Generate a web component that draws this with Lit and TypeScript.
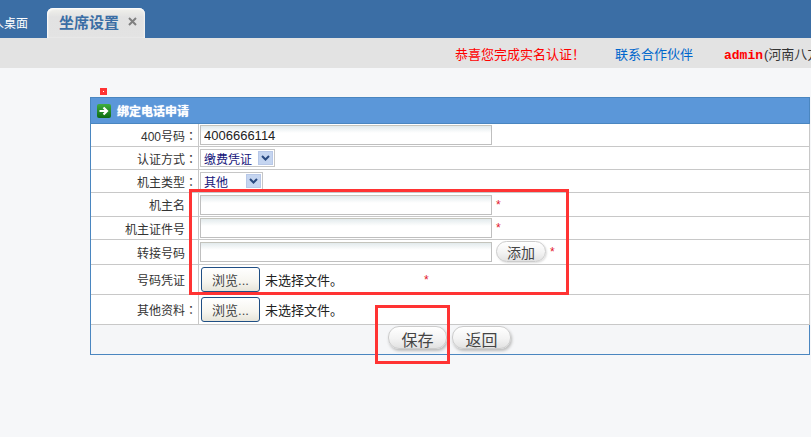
import { LitElement, html, css } from "lit";
import { customElement } from "lit/decorators.js";

@customElement("app-root")
export class AppRoot extends LitElement {
  static styles = css`
    :host { display: block; width: 811px; height: 437px; overflow: hidden; position: relative; background: #f6f7f9; font-family: "Liberation Sans", "Noto Sans CJK SC", sans-serif; font-size: 12px; color: #333; }
    .top { height: 38px; background: #3b6ea5; display: flex; align-items: flex-end; }
    .desk { width: 28px; height: 30px; overflow: hidden; display: flex; justify-content: flex-end; color: #fff; font-size: 12px; line-height: 32px; white-space: nowrap; flex: none; }
    .tab { width: 98px; height: 30px; box-sizing: border-box; margin-left: 19px; border-radius: 6px 6px 0 0; background: linear-gradient(#f2f2ec, #e2e2e2 30%, #e3e3e3); box-shadow: inset 1px 1px 2px #fff, inset -1px 0 2px #f4f4f4; display: flex; align-items: center; padding: 0 0 3px 12px; color: #3b6ea5; font-weight: 700; font-size: 15px; }
    .tab svg { margin-left: 9px; }
    .bar { height: 30px; background: #e3e3e3; display: flex; align-items: center; font-size: 13px; white-space: nowrap; padding-left: 455px; }
    .ok { color: #f00; width: 160px; flex: none; }
    .partner { color: #0066cc; width: 109px; flex: none; }
    .admin { color: #f00; font: 700 13px "Liberation Mono", monospace; margin-right: 1px; }
    .marker { width: 7px; height: 7px; margin: 20px 0 2px 100px; background: #f33; display: flex; align-items: center; justify-content: center; }
    .marker i { width: 1px; height: 1px; background: #fff; }
    .panel { margin-left: 90px; width: 720px; height: 258px; box-sizing: border-box; border: 1px solid #4a86c0; }
    .title { height: 26px; box-sizing: border-box; background: #5b97d9; border-bottom: 1px solid #4a86c0; display: flex; align-items: center; padding-left: 6px; color: #fff; font-weight: 700; font-size: 12px; text-shadow: 0 0 1px #e8f0fa; }
    .title svg { margin-right: 6px; }
    .row { display: flex; box-sizing: border-box; background: #fff; border-bottom: 1px solid #c8c8c8; border-right: 1px solid #c8c8c8; margin-right: -1px; white-space: nowrap; }
    .h23 { height: 23px; } .h24 { height: 24px; } .h25 { height: 25px; } .h30 { height: 30px; }
    .l { width: 108px; flex: none; box-sizing: border-box; border-right: 1px solid #c8c8c8; display: flex; align-items: center; justify-content: flex-end; padding-right: 1px; color: #333; }
    .l.plain { padding-right: 13px; }
    .colon { font-family: "Noto Sans CJK TC", sans-serif; }
    .v { flex: 1; display: flex; align-items: center; padding-left: 1px; }
    .inp { width: 292px; height: 20px; box-sizing: border-box; border: 1px solid #bfbfbf; border-top-color: #c4c4bc; padding: 0 3px; background: linear-gradient(#e2eaec, #fff 7px); font: 13px "Liberation Sans", sans-serif; color: #222; outline: none; }
    .star { color: #e3172b; font-size: 12px; margin-left: 4px; }
    .sel { height: 18px; box-sizing: border-box; border: 1px solid #c6c6c6; display: inline-flex; align-items: center; justify-content: space-between; padding: 0 1px 0 3px; color: #14147a; background: #fff; font-size: 12px; }
    .w75 { width: 75px; } .w63 { width: 63px; }
    .arrow { width: 15px; height: 14px; background: #c5d5f0; border: 1px solid #b8c8e8; box-sizing: border-box; display: flex; align-items: center; justify-content: center; }
    .file { width: 59px; height: 25px; box-sizing: border-box; border: 1px solid #1f4e84; border-radius: 3px; background: linear-gradient(#fff, #f6f5ef 60%, #e6e4d9); color: #444; font-family: "Liberation Sans", "Noto Sans CJK SC", sans-serif; font-size: 13px; padding: 0; margin-left: 1px; }
    .nofile { margin-left: 5px; font-size: 13px; color: #222; }
    .w155 { width: 155px; }
    .pill { border: 1px solid #ccc; border-radius: 11px; background: linear-gradient(#fff, #f3f3f3 55%, #e2e2e2); color: #444; padding: 0 0 3px; font-family: "Liberation Sans", "Noto Sans CJK SC", sans-serif; box-shadow: 1px 1px 2px #ddd; }
    .pill.add { width: 50px; height: 21px; font-size: 14px; margin: 0 0 1px 4px; }
    .foot { height: 29px; background: #f5f6f8; display: flex; align-items: flex-start; padding: 1px 0 0 297px; box-sizing: border-box; gap: 5px; }
    .pill.big { width: 59px; height: 23px; font-size: 16px; box-shadow: 1px 2px 3px #bbb; }
    .anno { position: absolute; box-sizing: border-box; border: 3px solid #f33; pointer-events: none; }
    .a1 { left: 189px; top: 189px; width: 380px; height: 106px; }
    .a2 { left: 375px; top: 305px; width: 75px; height: 59px; }
  `;

  private arrow() {
    return html`<span class="arrow"><svg width="9" height="6" viewBox="0 0 9 6"><path d="M1 1l3.5 3.5L8 1" fill="none" stroke="#2a4a80" stroke-width="2"/></svg></span>`;
  }

  private row(label: string, h: string, body: unknown, colon = true) {
    return html`<div class="row ${h}"><div class="l ${colon ? "" : "plain"}"><span>${label}${colon ? html`<span class="colon">：</span>` : ""}</span></div><div class="v">${body}</div></div>`;
  }

  render() {
    return html`
      <div class="top">
        <div class="desk"><span>个人桌面</span></div>
        <div class="tab">坐席设置
          <svg width="9" height="9" viewBox="0 0 9 9"><path d="M1 1l7 7M8 1l-7 7" stroke="#808080" stroke-width="2"/></svg>
        </div>
      </div>
      <div class="bar">
        <span class="ok">恭喜您完成实名认证！</span>
        <span class="partner">联系合作伙伴</span>
        <span><span class="admin">admin</span>(河南八方通信有限公司)</span>
      </div>
      <div class="marker"><i></i></div>
      <div class="panel">
        <div class="title">
          <svg width="14" height="14" viewBox="0 0 14 14"><defs><linearGradient id="g" x1="0" y1="0" x2="0" y2="1"><stop offset="0" stop-color="#3fae3f"/><stop offset="1" stop-color="#0d6b12"/></linearGradient></defs><rect width="14" height="14" rx="2" fill="url(#g)"/><path d="M2.5 7h7M6.5 3.5L10 7l-3.5 3.5" fill="none" stroke="#fff" stroke-width="2.2"/></svg>
          绑定电话申请
        </div>
        ${this.row("400号码", "h23", html`<input class="inp" value="4006666114" />`)}
        ${this.row("认证方式", "h23", html`<span class="sel w75">缴费凭证${this.arrow()}</span>`)}
        ${this.row("机主类型", "h23", html`<span class="sel w63">其他${this.arrow()}</span>`)}
        ${this.row("机主名", "h24", html`<input class="inp" /><span class="star">*</span>`, false)}
        ${this.row("机主证件号", "h23", html`<input class="inp" /><span class="star">*</span>`, false)}
        ${this.row("转接号码", "h25", html`<input class="inp" /><button class="pill add">添加</button><span class="star">*</span>`, false)}
        ${this.row("号码凭证", "h30", html`<button class="file">浏览...</button><span class="nofile w155">未选择文件。</span><span class="star">*</span>`, false)}
        ${this.row("其他资料", "h30", html`<button class="file">浏览...</button><span class="nofile">未选择文件。</span>`)}
        <div class="foot"><button class="pill big">保存</button><button class="pill big">返回</button></div>
      </div>
      <div class="anno a1"></div>
      <div class="anno a2"></div>
    `;
  }
}
